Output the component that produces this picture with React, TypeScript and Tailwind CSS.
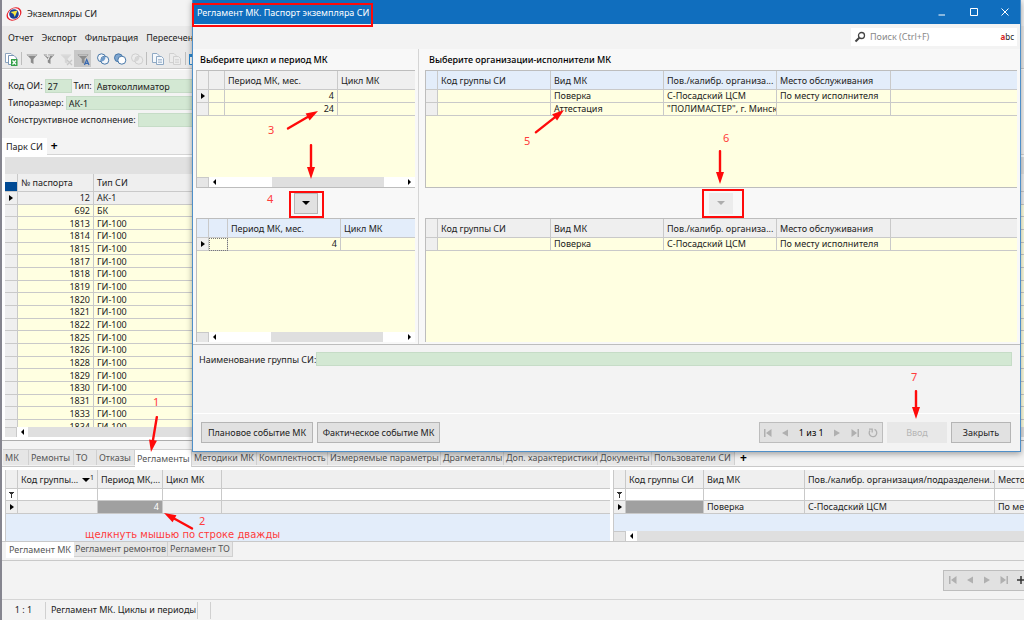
import type { ReactNode } from "react";

type Column = { title: string; width: string; right?: boolean; mark?: ReactNode };

const parkRows = [
  ["12", "АК-1"],
  ["692", "БК"],
  ["1813", "ГИ-100"],
  ["1814", "ГИ-100"],
  ["1815", "ГИ-100"],
  ["1817", "ГИ-100"],
  ["1818", "ГИ-100"],
  ["1819", "ГИ-100"],
  ["1820", "ГИ-100"],
  ["1821", "ГИ-100"],
  ["1822", "ГИ-100"],
  ["1825", "ГИ-100"],
  ["1826", "ГИ-100"],
  ["1828", "ГИ-100"],
  ["1829", "ГИ-100"],
  ["1830", "ГИ-100"],
  ["1831", "ГИ-100"],
  ["1833", "ГИ-100"],
  ["1834", "ГИ-100"],
];

const detailTabs = [
  { name: "МК", width: "w-[26px]" },
  { name: "Ремонты", width: "w-[45px]" },
  { name: "ТО", width: "w-[23px]" },
  { name: "Отказы", width: "w-[38px]" },
  { name: "Регламенты", width: "w-[57px]", active: true },
  { name: "Методики МК", width: "w-[65px]" },
  { name: "Комплектность", width: "w-[71px]" },
  { name: "Измеряемые параметры", width: "w-[113px]" },
  { name: "Драгметаллы", width: "w-[63px]" },
  { name: "Доп. характеристики", width: "w-[94px]" },
  { name: "Документы", width: "w-[54px]" },
  { name: "Пользователи СИ", width: "w-[83px]" },
];

const orgColumns: Column[] = [
  { title: "Код группы СИ", width: "w-[113px]" },
  { title: "Вид МК", width: "w-[113px]" },
  { title: "Пов./калибр. организа...", width: "w-[113px]" },
  { title: "Место обслуживания", width: "w-[114px]" },
  { title: "", width: "" },
];

function RowArrow() {
  return (
    <svg viewBox="0 0 4 6" className="mx-auto h-[6px] w-[4px]">
      <path d="M0 0L4 3L0 6Z" fill="#000" />
    </svg>
  );
}

function DownArrow({ color }: { color: string }) {
  return (
    <svg viewBox="0 0 8 4" className="h-[4px] w-[8px]">
      <path d="M0 0H8L4 4Z" fill={color} />
    </svg>
  );
}

// Header + rows of a data grid, the first column is the row indicator
function Grid({
  columns,
  rows,
  current,
  headBg = "bg-[#efefef]",
  cellBg = "bg-[#ffffe1]",
  filter,
  selected,
  focused,
}: {
  columns: Column[];
  rows: string[][];
  current?: number;
  headBg?: string;
  cellBg?: string;
  filter?: boolean;
  selected?: number;
  focused?: number;
}) {
  const line = "border-r border-b border-[#c9c9c9]";
  return (
    <table className="w-full table-fixed border-separate border-spacing-0">
      <thead>
        <tr className={`h-[19px] ${headBg}`}>
          <th className={`w-[12px] ${line}`} />
          {columns.map((column, index) => (
            <th
              key={index}
              className={`overflow-hidden pt-[2px] pr-0 pl-[3px] text-left font-normal whitespace-nowrap last:border-r-0 ${column.width} ${line}`}
            >
              {column.mark ? (
                <span className="flex items-center justify-between pr-[3px]">
                  {column.title}
                  {column.mark}
                </span>
              ) : (
                column.title
              )}
            </th>
          ))}
        </tr>
      </thead>
      <tbody>
        {filter && (
          <tr className="h-[12px] bg-white">
            <td className={line}>
              <svg viewBox="0 0 5 6" className="mx-auto h-[6px] w-[5px]">
                <path d="M0 .5H5M1 1.5H4M2.5 1V6" stroke="#333" fill="none" />
              </svg>
            </td>
            {columns.map((_, index) => (
              <td key={index} className={`last:border-r-0 ${line}`} />
            ))}
          </tr>
        )}
        {rows.map((row, index) => (
          <tr key={index} className={`h-[13px] ${cellBg}`}>
            <td className={`bg-[#efefef] ${line}`}>{index === current && <RowArrow />}</td>
            {row.map((cell, i) => (
              <td
                key={i}
                className={`overflow-hidden pl-[3px] whitespace-nowrap last:border-r-0 ${line} ${columns[i].right ? "pr-[3px] text-right" : "pr-0"} ${selected === i ? "bg-[#a0a0a0] text-white" : ""} ${focused === i ? "outline-1 -outline-offset-1 outline-dotted outline-[#777]" : ""}`}
              >
                {cell}
              </td>
            ))}
          </tr>
        ))}
      </tbody>
    </table>
  );
}

function ScrollBar({ thumb, end = true }: { thumb: string; end?: boolean }) {
  return (
    <div className="flex h-[10px] items-center bg-white">
      <div className="h-full w-[12px] shrink-0 border-t border-r border-[#c9c9c9] bg-[#e6e6e6]" />
      <svg viewBox="0 0 3 6" className="mx-1 h-[6px] w-[3px] shrink-0">
        <path d="M3 0L0 3L3 6Z" fill="#000" />
      </svg>
      <div className="flex h-full min-w-0 flex-1">
        <div className={`h-full bg-[#dfdfdf] ${thumb}`} />
      </div>
      {end && (
        <svg viewBox="0 0 3 6" className="mx-1 h-[6px] w-[3px] shrink-0">
          <path d="M0 0L3 3L0 6Z" fill="#000" />
        </svg>
      )}
    </div>
  );
}

function NavIcon({ d }: { d: string }) {
  return (
    <svg viewBox="0 0 8 8" className="h-[8px] w-[8px]">
      <path d={d} fill="#b0b0b0" />
    </svg>
  );
}

const navFirst = "M0 0H1.500V8H0ZM7.500 0V8L2 4Z";
const navPrev = "M7 .5V7.500L1 4Z";
const navNext = "M1 .5V7.500L7 4Z";
const navLast = "M6.500 0H8V8H6.500ZM.5 0V8L6 4Z";

function Funnel({ color, children }: { color: string; children?: ReactNode }) {
  return (
    <svg viewBox="0 0 14 14" className="h-[14px] w-[14px]">
      <path d="M1.500 2.500H12.500L8.500 7V12L5.800 10.500V7Z" fill={color} />
      <path d="M3 3.300H11" stroke="#ddd" strokeWidth=".8" />
      {children}
    </svg>
  );
}

// Two overlapping sets, the overlap is filled with `middle`
function Circles({ left, right, middle, stroke }: { left: string; right: string; middle: string; stroke: string }) {
  return (
    <svg viewBox="0 0 14 14" className="h-[14px] w-[14px]">
      <circle cx="5.500" cy="5.800" r="4" fill={left} stroke={stroke} />
      <circle cx="8.800" cy="8.200" r="4" fill={right} stroke={stroke} />
      <path d="M4.900 9.300A4 4 0 0 1 9.400 4.700A4 4 0 0 1 4.900 9.300Z" fill={middle} />
    </svg>
  );
}

function Pages({ color, fill }: { color: string; fill: string }) {
  return (
    <svg viewBox="0 0 14 14" className="h-[14px] w-[14px]">
      <path d="M1.500 1.500H6L8 3.500V10.500H1.500Z" fill={fill} stroke={color} />
      <path d="M5.500 4.500H10.500L12.500 6.500V12.500H5.500Z" fill={fill} stroke={color} />
      <path d="M7 7.500H11M7 9H11M7 10.500H11" stroke={color} strokeWidth=".7" />
    </svg>
  );
}

function ToolButton({ label, active, children }: { label: string; active?: boolean; children: ReactNode }) {
  return (
    <button aria-label={label} className={`flex h-[17px] w-[17px] shrink-0 items-center justify-center ${active ? "bg-[#c8c8c8]" : ""}`}>
      {children}
    </button>
  );
}

function Separator() {
  return <div className="h-[13px] w-px shrink-0 bg-[#bdbdbd]" />;
}

function MainWindow() {
  const field = "h-[14px] border border-[#c6dcc7] bg-[#d3e8d3] px-[2px] outline-none";
  return (
    <div className="flex min-h-screen flex-col border-l-2 border-[#85858f] bg-[#f3f3f3]">
      <div className="flex h-[26px] items-center gap-[5px] pt-[2px] pl-1">
        <svg viewBox="0 0 16 16" className="h-[16px] w-[16px]">
          <ellipse cx="8" cy="8" rx="8" ry="6" fill="#e8202a" transform="rotate(-35 8 8)" />
          <ellipse cx="8" cy="8" rx="6.500" ry="5.300" fill="#fff" transform="rotate(-35 8 8)" />
          <circle cx="8" cy="8" r="4.800" fill="#1b3f94" />
          <path d="M4.500 6L11.500 4.500L8.800 11L7.500 8Z" fill="#f5e642" />
        </svg>
        <h1>Экземпляры СИ</h1>
      </div>
      <div className="flex h-[23px] items-center gap-2 bg-[#eaeaea] pl-[6px]">
        <button>Отчет</button>
        <button>Экспорт</button>
        <button>Фильтрация</button>
        <button>Пересечение</button>
      </div>
      <div className="flex h-[20px] items-center border-b border-[#c9c9c9] bg-[#eaeaea]">
        <ToolButton label="Экспорт в Excel">
          <svg viewBox="0 0 14 14" className="h-[14px] w-[14px]">
            <path d="M1.500 1.500H7L9 3.500V10.500H1.500Z" fill="#fff" stroke="#8ba3bd" />
            <path d="M4.500 3.500H10L12.500 6V12.500H4.500Z" fill="#fff" stroke="#7b98b8" />
            <rect x="7" y="7" width="6.500" height="7" fill="#35a04a" />
            <path d="M8.500 8.500L12 12.500M12 8.500L8.500 12.500" stroke="#fff" strokeWidth="1.200" />
          </svg>
        </ToolButton>
        <div className="w-[2px]" />
        <Separator />
        <div className="w-px" />
        <ToolButton label="Фильтр">
          <Funnel color="#8b8b8b" />
        </ToolButton>
        <ToolButton label="Фильтр по выделенному">
          <Funnel color="#8b8b8b">
            <path d="M6 1L5 4.500L7.500 4L6 8" stroke="#eaeaea" fill="none" />
          </Funnel>
        </ToolButton>
        <ToolButton label="Снять фильтр">
          <Funnel color="#d6d6d6">
            <path d="M8 8L13 13M13 8L8 13" stroke="#c8c8c8" strokeWidth="1.300" />
          </Funnel>
        </ToolButton>
        <ToolButton label="Автофильтр" active>
          <Funnel color="#8b8b8b">
            <path d="M8.500 13L10.700 7.500L13 13M9.300 11.300H12.200" stroke="#3768b0" strokeWidth="1.200" fill="none" />
          </Funnel>
        </ToolButton>
        <div className="w-[3px]" />
        <ToolButton label="Пересечение">
          <Circles left="#f3f6fa" right="#f3f6fa" middle="#6f9bcb" stroke="#4777a8" />
        </ToolButton>
        <ToolButton label="Вычитание">
          <Circles left="#7fa6d0" right="#fff" middle="none" stroke="#4777a8" />
        </ToolButton>
        <ToolButton label="Объединение">
          <Circles left="#ececec" right="#ececec" middle="#d6d6d6" stroke="#cfcfcf" />
        </ToolButton>
        <div className="w-px" />
        <Separator />
        <div className="w-[2px]" />
        <ToolButton label="Копировать">
          <Pages color="#8fa9c4" fill="#f4f8fc" />
        </ToolButton>
        <ToolButton label="Вставить">
          <Pages color="#d0d0d0" fill="#ececec" />
        </ToolButton>
        <div className="w-[2px]" />
        <Separator />
        <ToolButton label="Календарь">
          <svg viewBox="0 0 14 14" className="h-[14px] w-[14px]">
            <path d="M1.500 2.500H13V12.500H1.500Z" fill="#fff" stroke="#2d8ad0" />
            <path d="M1 2H13V5H1Z" fill="#2d8ad0" />
          </svg>
        </ToolButton>
      </div>

      <div className="flex flex-col gap-[3px] border-t border-white px-[6px] pt-[9px] pb-[11px]">
        <div className="flex items-center gap-[2px]">
          <label htmlFor="code">Код ОИ:</label>
          <input id="code" className={`w-[27px] ${field}`} defaultValue="27" />
          <label htmlFor="type">Тип:</label>
          <input id="type" className={`min-w-0 flex-1 ${field}`} defaultValue="Автоколлиматор" />
        </div>
        <div className="flex items-center gap-[2px]">
          <label htmlFor="size">Типоразмер:</label>
          <input id="size" className={`min-w-0 flex-1 ${field}`} defaultValue="АК-1" />
        </div>
        <div className="flex items-center gap-[2px]">
          <label htmlFor="design">Конструктивное исполнение:</label>
          <input id="design" className={`min-w-0 flex-1 ${field}`} />
        </div>
      </div>

      <div className="flex h-[17px] border-b border-[#d5d5d5]">
        <button className="h-[18px] bg-white px-1">Парк СИ</button>
        <button className="px-1 text-[12px] font-bold text-black">+</button>
      </div>
      <div className="border-b border-[#adadad] bg-white pt-[2px] pb-[3px] pl-[3px]">
        <div className="h-[17px] bg-[#e1e1e1]" />
        <div className="h-[253px] overflow-hidden">
          <table className="h-[259px] w-full table-fixed border-separate border-spacing-0">
            <thead>
              <tr className="h-[18px] bg-[#efefef]">
                <th className="w-[13px] border-r border-b border-[#c9c9c9] p-0 align-bottom">
                  <div className="h-[9px] bg-[#004a94]" />
                </th>
                <th className="w-[76px] border-r border-b border-[#c9c9c9] px-[3px] text-left font-normal">№ паспорта</th>
                <th className="border-b border-[#c9c9c9] px-[3px] text-left font-normal">Тип СИ</th>
              </tr>
            </thead>
            <tbody>
              {parkRows.map(([num, type], index) => (
                <tr key={num} className={index === 0 ? "bg-[#efefef]" : "bg-[#ffffe1]"}>
                  <td className="border-r border-b border-[#c9c9c9] bg-[#efefef] p-0">{index === 0 && <RowArrow />}</td>
                  <td className="border-r border-b border-[#c9c9c9] px-[3px] py-0 text-right leading-[11px]">{num}</td>
                  <td className="border-b border-[#c9c9c9] px-[3px] py-0 leading-[11px]">{type}</td>
                </tr>
              ))}
            </tbody>
          </table>
        </div>
        <ScrollBar thumb="flex-1" end={false} />
      </div>

      <div className="mt-[8px] flex h-[18px] border-b border-[#c9c9c9] pl-px text-[#555]">
        {detailTabs.map((tab) => (
          <button
            key={tab.name}
            className={`shrink-0 border-t border-r border-[#d0d0d0] px-[2px] text-left whitespace-nowrap ${tab.width} ${tab.active ? "h-[18px] bg-white" : "h-[16px] bg-[#e6e6e6]"}`}
          >
            {tab.name}
          </button>
        ))}
        <button className="px-[5px] text-[12px] font-bold text-black">+</button>
      </div>
      <div className="flex gap-[3px] border-b border-[#c9c9c9] bg-white pt-[3px] pl-[3px]">
        <div className="w-[605px] shrink-0 border-l border-[#c9c9c9] bg-[#e3edfa]">
          <Grid
            cellBg="bg-[#efefef]"
            filter
            current={0}
            selected={1}
            columns={[
              {
                title: "Код группы...",
                width: "w-[80px]",
                mark: (
                  <span className="flex items-center text-[7px]">
                    <DownArrow color="#000" />
                    <span className="pb-1 leading-[8px]">1</span>
                  </span>
                ),
              },
              { title: "Период МК,...", width: "w-[65px]", right: true },
              { title: "Цикл МК", width: "w-[59px]" },
              { title: "", width: "" },
            ]}
            rows={[["", "4", "", ""]]}
          />
        </div>
        <div className="min-w-0 flex-1 border-l border-[#c9c9c9] bg-[#e3edfa]">
          <Grid
            cellBg="bg-[#efefef]"
            filter
            current={0}
            selected={0}
            columns={[
              { title: "Код группы СИ", width: "w-[78px]" },
              { title: "Вид МК", width: "w-[101px]" },
              { title: "Пов./калибр. организация/подразделени...", width: "w-[190px]" },
              { title: "Место обслуживания", width: "" },
            ]}
            rows={[["", "Поверка", "С-Посадский ЦСМ", "По месту исполнителя"]]}
          />
          <div className="h-[17px]" />
          <ScrollBar thumb="flex-1" end={false} />
        </div>
      </div>
      <div className="flex h-[19px] border-b border-[#c9c9c9] pl-1 text-[#555]">
        <button className="h-[16px] w-[68px] bg-white whitespace-nowrap">Регламент МК</button>
        <button className="h-[15px] w-[94px] border-r border-b border-[#d0d0d0] bg-[#e6e6e6] whitespace-nowrap">Регламент ремонтов</button>
        <button className="h-[15px] w-[65px] border-r border-b border-[#d0d0d0] bg-[#e6e6e6] whitespace-nowrap">Регламент ТО</button>
      </div>
      <div className="flex h-[39px] items-center justify-end overflow-hidden border-b border-[#d5d5d5]">
        <div className="flex h-[21px] w-[81px] shrink-0 items-center gap-[9px] border border-r-0 border-[#bdbdbd] bg-[#e1e1e1] pl-[5px]">
          <button aria-label="Первая"><NavIcon d={navFirst} /></button>
          <button aria-label="Предыдущая"><NavIcon d={navPrev} /></button>
          <button aria-label="Следующая"><NavIcon d={navNext} /></button>
          <button aria-label="Последняя"><NavIcon d={navLast} /></button>
          <svg viewBox="0 0 8 8" className="h-[8px] w-[8px] shrink-0">
            <path d="M0 4H8M4 0V8" stroke="#333" strokeWidth="1.500" />
          </svg>
        </div>
      </div>
      <div className="flex h-[20px] items-center">
        <span className="w-[43px] text-center">1 : 1</span>
        <span className="flex h-[17px] items-center border-x border-[#d0d0d0] pr-px pl-[5px]">Регламент МК. Циклы и периоды</span>
        <span className="h-[17px] w-[13px] border-r border-[#d0d0d0]" />
      </div>
    </div>
  );
}

function Dialog() {
  const button = "h-[21px] border border-[#b5b5b5] bg-[#e1e1e1] text-center whitespace-nowrap";
  return (
    <div className="absolute top-0 right-[3px] left-[192px] flex flex-col border border-t-0 border-[#4f8fc8] bg-[#f3f3f3] shadow-[0_2px_6px_rgba(0,0,0,0.35)]">
      <div className="flex h-[24px] items-center justify-between bg-[#106ebe] pl-1 text-white">
        <h2 className="pt-[2px]">Регламент МК. Паспорт экземпляра СИ</h2>
        <div className="flex">
          <button aria-label="Свернуть" className="flex w-[32px] justify-center">
            <svg viewBox="0 0 8 8" className="h-[8px] w-[8px]"><path d="M.5 7H7" stroke="#fff" /></svg>
          </button>
          <button aria-label="Развернуть" className="flex w-[31px] justify-center">
            <svg viewBox="0 0 8 8" className="h-[8px] w-[8px]"><path d="M.5 .5H7.500V7.500H.5Z" stroke="#fff" fill="none" /></svg>
          </button>
          <button aria-label="Закрыть окно" className="flex w-[31px] justify-center">
            <svg viewBox="0 0 8 8" className="h-[8px] w-[8px]"><path d="M.5 .5L7.500 7.500M7.500 .5L.5 7.500" stroke="#fff" /></svg>
          </button>
        </div>
      </div>
      <div className="flex h-[25px] items-center justify-end pr-[3px]">
        <div className="flex h-[18px] w-[166px] items-center gap-1 bg-white px-[3px]">
          <svg viewBox="0 0 12 12" className="h-[12px] w-[12px]">
            <circle cx="7.500" cy="4.500" r="3" fill="none" stroke="#444" strokeWidth="1.300" />
            <path d="M5.300 6.700L1.500 10.500" stroke="#444" strokeWidth="2" />
          </svg>
          <input aria-label="Поиск" placeholder="Поиск (Ctrl+F)" className="min-w-0 flex-1 outline-none placeholder:text-[#888]" />
          <span className="text-[8px]"><b className="text-[#d81e1e]">a</b>bc</span>
        </div>
      </div>

      <div className="flex border-b border-[#bdbdbd] bg-[#f8f8f8]">
        <section className="w-[226px] shrink-0 border-r border-[#d5d5d5] pb-[2px] pr-[3px] pl-[3px]">
          <h3 className="h-[21px] px-1 font-medium leading-[21px] text-black">Выберите цикл и период МК</h3>
          <div className="flex h-[118px] flex-col border-t border-b border-l border-[#bdbdbd] bg-[#ffffe1]">
            <Grid
              current={0}
              columns={[
                { title: "", width: "w-[16px]" },
                { title: "Период МК, мес.", width: "w-[113px]", right: true },
                { title: "Цикл МК", width: "" },
              ]}
              rows={[["", "4", ""], ["", "24", ""]]}
            />
            <div className="flex-1" />
            <ScrollBar thumb="ml-[52px] w-[112px]" />
          </div>
          <div className="flex h-[30px] items-center justify-center">
            <button aria-label="Добавить цикл" className="flex h-[21px] w-[24px] items-center justify-center border border-[#b5b5b5] bg-[#e1e1e1]">
              <DownArrow color="#000" />
            </button>
          </div>
          <div className="flex h-[124px] flex-col border-t border-l border-[#bdbdbd] bg-[#ffffe1]">
            <Grid
              current={0}
              focused={0}
              headBg="bg-[#e3edfa]"
              columns={[
                { title: "", width: "w-[19px]" },
                { title: "Период МК, мес.", width: "w-[113px]", right: true },
                { title: "Цикл МК", width: "" },
              ]}
              rows={[["", "4", ""]]}
            />
            <div className="flex-1" />
            <ScrollBar thumb="ml-[51px] w-[112px]" />
          </div>
        </section>
        <section className="ml-[3px] min-w-0 flex-1 pb-[2px] pr-[3px] pl-[3px]">
          <h3 className="h-[21px] px-1 font-medium leading-[21px] text-black">Выберите организации-исполнители МК</h3>
          <div className="h-[118px] border-t border-b border-l border-[#bdbdbd] bg-[#ffffe1]">
            <Grid
              headBg="bg-[#e3edfa]"
              columns={orgColumns}
              rows={[
                ["", "Поверка", "С-Посадский ЦСМ", "По месту исполнителя", ""],
                ["", "Аттестация", "\"ПОЛИМАСТЕР\", г. Минск", "", ""],
              ]}
            />
          </div>
          <div className="flex h-[30px] items-center justify-center">
            <button aria-label="Добавить организацию" disabled className="flex h-[21px] w-[24px] items-center justify-center bg-[#ececec]">
              <DownArrow color="#adadad" />
            </button>
          </div>
          <div className="h-[124px] border-t border-l border-[#bdbdbd] bg-[#ffffe1]">
            <Grid columns={orgColumns} rows={[["", "Поверка", "С-Посадский ЦСМ", "По месту исполнителя", ""]]} />
          </div>
        </section>
      </div>

      <div className="flex h-[69px] items-start border-b border-white px-[6px] pt-[7px] pr-[8px]">
        <label htmlFor="group" className="leading-[15px]">Наименование группы СИ:</label>
        <input id="group" className="h-[14px] min-w-0 flex-1 border border-[#c6dcc7] bg-[#d3e8d3] px-[3px] outline-none" />
      </div>
      <div className="flex h-[37px] items-center gap-1 pr-[9px] pl-2">
        <button className={`w-[112px] ${button}`}>Плановое событие МК</button>
        <button className={`w-[123px] ${button}`}>Фактическое событие МК</button>
        <div className="ml-auto flex h-[21px] w-[124px] items-center justify-between border border-[#bdbdbd] bg-[#e1e1e1] px-1">
          <button aria-label="Первая запись"><NavIcon d={navFirst} /></button>
          <button aria-label="Предыдущая запись"><NavIcon d={navPrev} /></button>
          <span className="text-black">1 из 1</span>
          <button aria-label="Следующая запись"><NavIcon d={navNext} /></button>
          <button aria-label="Последняя запись"><NavIcon d={navLast} /></button>
          <button aria-label="Обновить">
            <svg viewBox="0 0 10 10" className="h-[10px] w-[10px]">
              <path d="M2 2.500A3.800 3.800 0 1 0 6.500 1.400M1 1.200H4.200V4.400" fill="none" stroke="#b0b0b0" strokeWidth="1.300" />
            </svg>
          </button>
        </div>
        <button disabled className="h-[21px] w-[60px] bg-[#e8e8e8] text-[#b5b5b5]">Ввод</button>
        <button className={`w-[60px] ${button}`}>Закрыть</button>
      </div>
    </div>
  );
}

const arrows = [
  [157, 416, 151, 452],
  [193, 529, 164, 513],
  [287, 129, 318, 111],
  [311, 144, 311, 179],
  [535, 133, 564, 110],
  [720, 150, 720, 184],
  [916, 390, 916, 419],
];

function Notes() {
  const text = "absolute text-[11px] leading-[14px] text-[#ff3b3b]";
  return (
    <div className="pointer-events-none absolute top-0 left-0 h-[620px] w-[1024px]">
      <svg viewBox="0 0 1024 620" className="h-[620px] w-[1024px]">
        {arrows.map(([x1, y1, x2, y2]) => {
          const length = Math.hypot(x2 - x1, y2 - y1);
          const angle = (Math.atan2(y2 - y1, x2 - x1) * 180) / Math.PI;
          return (
            <g key={`${x1}-${y1}`} transform={`translate(${x1} ${y1}) rotate(${angle})`} fill="#ff0a0a">
              <rect x="0" y="-1.200" width={length - 10} height="2.400" rx="1" />
              <path d={`M${length} 0l-12 -4v8Z`} />
            </g>
          );
        })}
      </svg>
      <div className="absolute top-[3px] left-[192px] h-[24px] w-[181px] border-2 border-[#ff0a0a]" />
      <div className="absolute top-[191px] left-[289px] h-[27px] w-[35px] border-2 border-[#ff0a0a]" />
      <div className="absolute top-[189px] left-[702px] h-[29px] w-[42px] border-2 border-[#ff0a0a]" />
      <span className={`top-[395px] left-[153px] ${text}`}>1</span>
      <span className={`top-[514px] left-[199px] ${text}`}>2</span>
      <span className={`top-[123px] left-[268px] ${text}`}>3</span>
      <span className={`top-[192px] left-[267px] ${text}`}>4</span>
      <span className={`top-[134px] left-[524px] ${text}`}>5</span>
      <span className={`top-[131px] left-[723px] ${text}`}>6</span>
      <span className={`top-[370px] left-[911px] ${text}`}>7</span>
      <span className="absolute top-[528px] left-[85px] text-[10px] leading-[14px] whitespace-nowrap text-[#ff3b3b] font-['DejaVu_Sans',sans-serif]">
        щелкнуть мышью по строке дважды
      </span>
    </div>
  );
}

export default function App() {
  return (
    <div className="relative w-full overflow-hidden font-['Noto_Sans','Open_Sans',sans-serif] text-[9px] leading-[12px] text-[#222]">
      <MainWindow />
      <Dialog />
      <Notes />
    </div>
  );
}
